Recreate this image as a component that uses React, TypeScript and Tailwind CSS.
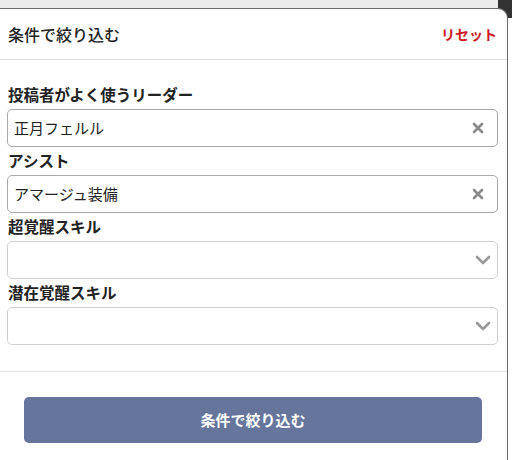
const font = { fontFamily: '"Noto Sans CJK JP", "Noto Sans", sans-serif' };

function ClearIcon() {
  return (
    <svg width="12" height="12" viewBox="0 0 12 12" className="shrink-0">
      <path d="M2 2 L10 10 M10 2 L2 10" stroke="#8a8a8a" strokeWidth="2.6" strokeLinecap="round" />
    </svg>
  );
}

function ChevronIcon() {
  return (
    <svg width="16" height="10" viewBox="0 0 16 10" className="shrink-0">
      <path d="M2 2 L8 8 L14 2" stroke="#999" strokeWidth="2.6" fill="none" strokeLinecap="round" strokeLinejoin="round" />
    </svg>
  );
}

function Field({ label, value, kind, extra = '' }: { label: string; value?: string; kind: 'clear' | 'select'; extra?: string }) {
  const border = kind === 'clear' ? 'border-[#a8a8a8]' : 'border-[#cfcfcf]';
  return (
    <div className={extra}>
      <div className="h-[28px] flex items-center pl-2 text-[15.5px] font-bold text-[#222]">{label}</div>
      <div className={`ml-[7px] w-[491px] h-[38px] border ${border} rounded-[5px] flex items-center justify-between pl-[6px] ${kind === 'clear' ? 'pr-[13px]' : 'pr-[6px]'}`}>
        <span className="text-[15px] text-[#222]">{value ?? ''}</span>
        {kind === 'clear' ? <ClearIcon /> : <ChevronIcon />}
      </div>
    </div>
  );
}

export default function App() {
  return (
    <div className="w-[512px] h-[460px] bg-white overflow-hidden relative" style={font}>
      <div className="h-2 bg-[#ececec]" />
      <div className="absolute top-0 right-0 w-[14px] h-[18px] bg-[#333]" />
      <div className="relative w-[508px] h-[452px] bg-white border-t border-r border-[#6b6b6b] rounded-tr-[10px]">
        <div className="h-[51px] flex items-center justify-between px-2 border-b border-[#dedede]">
          <span className="text-[16px] font-medium text-[#222]">条件で絞り込む</span>
          <span className="text-[14px] font-bold text-[#cc1a1f] pr-[2px]">リセット</span>
        </div>
        <div className="pt-[21px]">
          <Field label="投稿者がよく使うリーダー" value="正月フェルル" kind="clear" />
          <Field label="アシスト" value="アマージュ装備" kind="clear" />
          <Field label="超覚醒スキル" kind="select" />
          <Field label="潜在覚醒スキル" kind="select" />
        </div>
        <div className="mt-[26px] border-t border-[#e2e2e2]">
          <button className="mt-[25px] ml-[24px] w-[458px] h-[46px] rounded-[5px] bg-[#65759c] text-white text-[15px] font-bold flex items-center justify-center">
            条件で絞り込む
          </button>
        </div>
      </div>
    </div>
  );
}
